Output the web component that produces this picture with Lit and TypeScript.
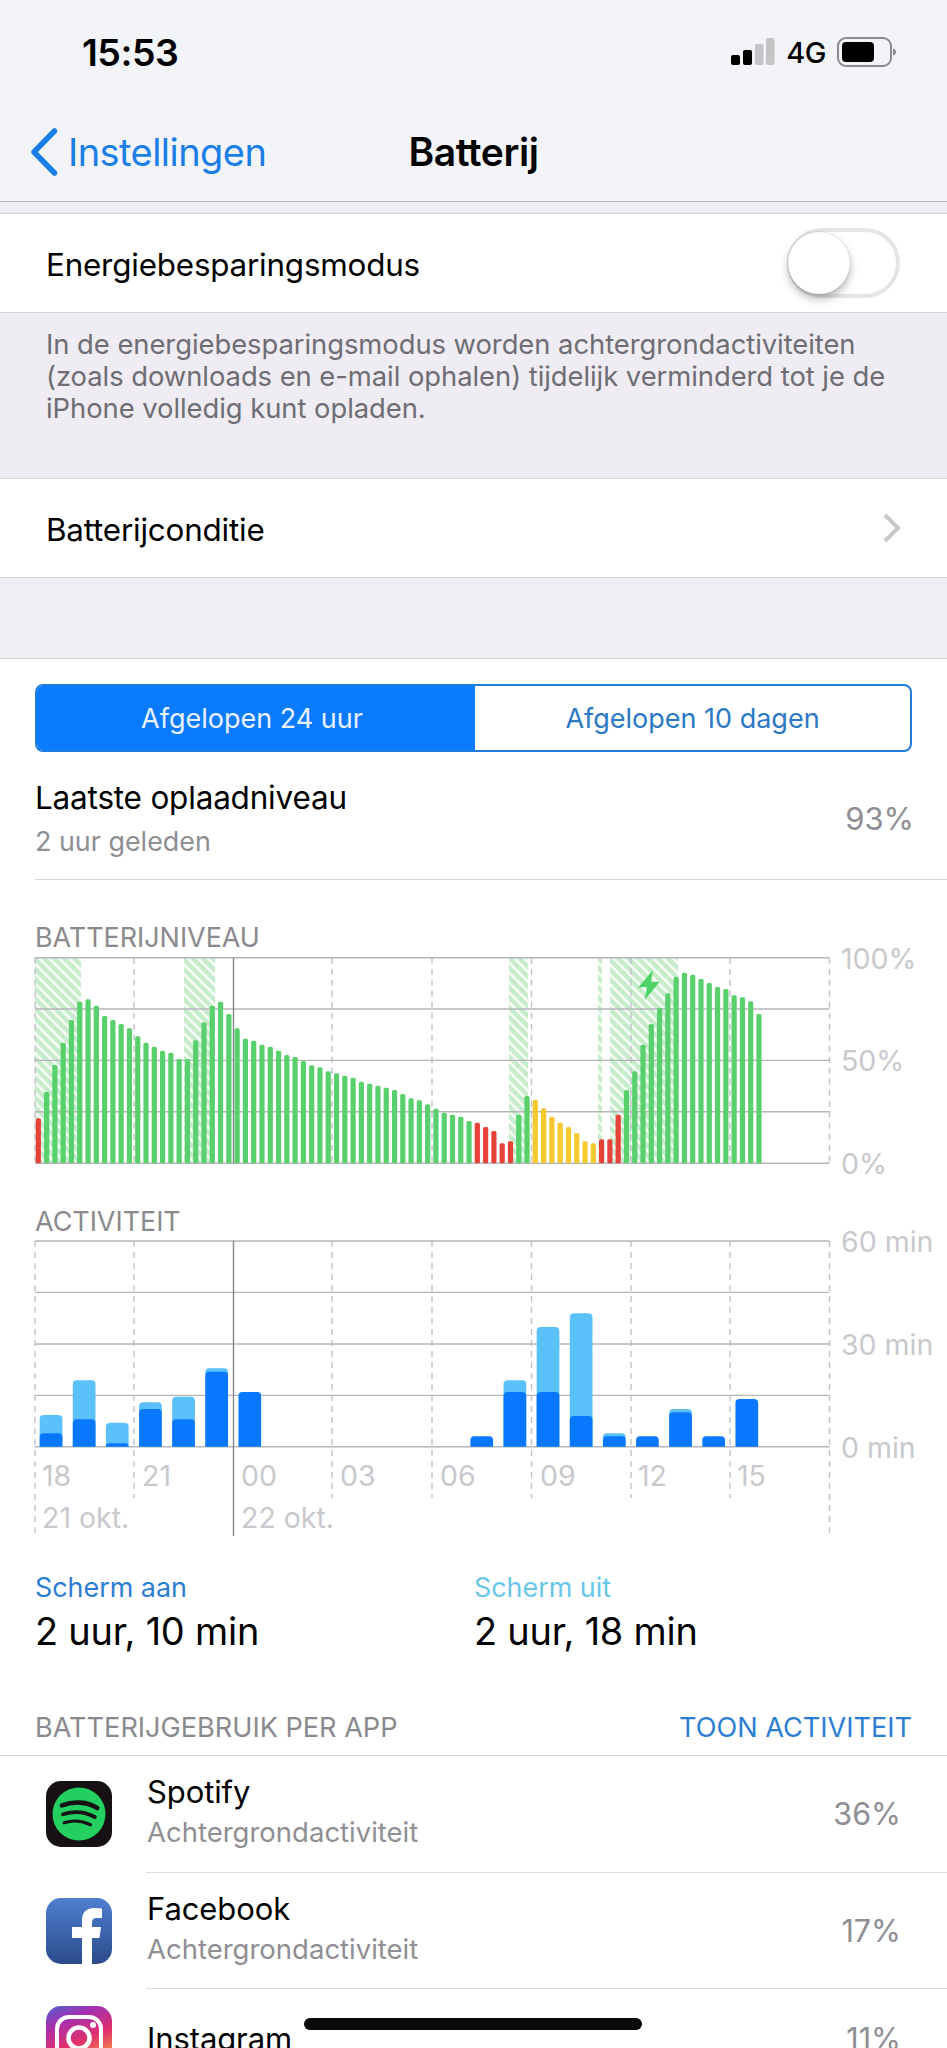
import { LitElement, css, html, svg } from 'lit';
import { customElement } from 'lit/decorators.js';

type Tone = 'g' | 'r' | 'y';

// bar tops as measured on the 3x crops, baseline is 730
const LEVELS: [number, Tone][] = [
  [595, 'r'], [516, 'g'], [435, 'g'], [368, 'g'], [300, 'g'], [245, 'g'], [238, 'g'], [257, 'g'], [288, 'g'],
  [300, 'g'], [312, 'g'], [325, 'g'], [349, 'g'], [368, 'g'], [380, 'g'], [392, 'g'], [398, 'g'], [417, 'g'],
  [417, 'g'], [361, 'g'], [307, 'g'], [257, 'g'], [245, 'g'], [282, 'g'], [325, 'g'], [356, 'g'], [362, 'g'],
  [374, 'g'], [380, 'g'], [392, 'g'], [405, 'g'], [411, 'g'], [423, 'g'], [436, 'g'], [442, 'g'], [454, 'g'],
  [460, 'g'], [467, 'g'], [473, 'g'], [485, 'g'], [491, 'g'], [497, 'g'], [503, 'g'], [510, 'g'], [522, 'g'],
  [535, 'g'], [541, 'g'], [553, 'g'], [566, 'g'], [578, 'g'], [584, 'g'], [590, 'g'], [603, 'g'], [608, 'r'],
  [621, 'r'], [633, 'r'], [670, 'r'], [664, 'r'], [584, 'g'], [528, 'g'], [540, 'y'], [565, 'y'], [590, 'y'],
  [608, 'y'], [621, 'y'], [639, 'y'], [664, 'y'], [670, 'y'], [658, 'r'], [658, 'r'], [584, 'r'], [510, 'g'],
  [454, 'g'], [374, 'g'], [312, 'g'], [263, 'g'], [220, 'g'], [171, 'g'], [158, 'g'], [164, 'g'], [177, 'g'],
  [189, 'g'], [201, 'g'], [207, 'g'], [226, 'g'], [232, 'g'], [244, 'g'], [282, 'g'],
];

// slot, top of light bar, top of dark bar (3x crops, baseline 740)
const ACTIVITY: [number, number, number][] = [
  [0, 645, 700], [1, 541, 658], [2, 668, 730], [3, 607, 627], [4, 590, 658], [5, 505, 515], [6, 576, 576],
  [13, 709, 709], [14, 541, 576], [15, 381, 576], [16, 340, 648], [17, 700, 709], [18, 709, 709],
  [19, 627, 637], [20, 709, 709], [21, 597, 597],
];

const CHARGING: [number, number][] = [[35, 46], [184, 31], [509, 19], [598, 4], [610, 68]];
const DASHES = [35, 134, 332, 432, 531.5, 631, 730, 829.5];
const HOURS: [string, number][] = [['18', 42], ['21', 142], ['00', 241], ['03', 340], ['06', 440], ['09', 540], ['12', 638], ['15', 737]];

@customElement('app-root')
export class AppRoot extends LitElement {
  static styles = css`
    :host {
      display: block;
      position: relative;
      width: 947px;
      height: 2048px;
      overflow: hidden;
      background: #fff;
      color: #000;
      font-family: Inter, 'Noto Sans', sans-serif;
    }

    .top {
      height: 201px;
      background: #f3f4f8;
      border-bottom: 1px solid #b4b4b8;
    }

    .status {
      display: flex;
      align-items: center;
      height: 104px;
      padding: 0 50px 0 82px;
    }

    .time {
      flex: 1;
      font-size: 37.5px;
      font-weight: 600;
      letter-spacing: -0.5px;
    }

    .net {
      margin: 0 11px 0 11px;
      font-size: 29px;
      font-weight: 500;
      letter-spacing: -0.5px;
    }

    .nav {
      display: grid;
      grid-template-columns: 1fr auto 1fr;
      align-items: center;
      box-sizing: border-box;
      height: 97px;
      padding-bottom: 2px;
    }

    .back {
      display: flex;
      align-items: center;
      gap: 10px;
      padding-left: 30px;
      font-size: 38px;
      color: #1a7ee6;
      letter-spacing: -0.55px;
    }

    .title {
      font-size: 39px;
      font-weight: 600;
      letter-spacing: -0.4px;
    }

    .gap {
      height: 11px;
      background: #eeeff4;
      border-bottom: 1px solid #d6d6da;
    }

    .row {
      display: flex;
      align-items: center;
      justify-content: space-between;
      height: 98px;
      padding: 0 46px;
      background: #fff;
      font-size: 31.4px;
      letter-spacing: -0.2px;
      border-bottom: 1px solid #d6d6da;
    }

    .row .label {
      margin-top: 4px;
    }

    .switch {
      display: flex;
      align-items: center;
      box-sizing: border-box;
      width: 113px;
      height: 70px;
      margin-right: 1px;
      border: 4px solid #e5e5e8;
      border-radius: 35px;
    }

    .knob {
      width: 62px;
      height: 62px;
      margin-left: -3px;
      border-radius: 50%;
      background: #fff;
      box-shadow: 0 5px 9px rgba(0, 0, 0, 0.28), 0 0 2px rgba(0, 0, 0, 0.2);
    }

    .note {
      box-sizing: border-box;
      height: 166px;
      padding: 15px 46px 0;
      background: #efecf3;
      color: #6e6d73;
      font-size: 27.4px;
      line-height: 32px;
      letter-spacing: -0.05px;
      white-space: nowrap;
      border-bottom: 1px solid #d9d9dd;
    }

    .band {
      height: 80px;
      background: #efeef3;
      border-bottom: 1px solid #d6d6da;
    }

    .segment {
      display: grid;
      grid-template-columns: 438px 1fr;
      box-sizing: border-box;
      width: 877px;
      height: 68px;
      margin: 25px 0 0 35px;
      border: 2px solid #1f7de0;
      border-radius: 8px;
      overflow: hidden;
      font-size: 27px;
      color: #2b78c5;
    }

    .segment span {
      display: flex;
      align-items: center;
      justify-content: center;
    }

    .segment .on {
      padding-right: 8px;
      background: #0a7aff;
      color: #e8f2ff;
    }

    .last {
      display: flex;
      align-items: center;
      justify-content: space-between;
      box-sizing: border-box;
      height: 128px;
      margin-left: 35px;
      padding: 6px 33px 0 0;
      border-bottom: 1px solid #d6d6da;
    }

    .last b {
      display: block;
      font-size: 31.5px;
      font-weight: 400;
      line-height: 44px;
      letter-spacing: -0.2px;
    }

    .last small {
      display: block;
      font-size: 26.9px;
      line-height: 42px;
      color: #8e8e93;
    }

    .last em {
      font-style: normal;
      font-size: 31px;
      color: #8e8e93;
    }

    .caption {
      height: 24px;
      margin-left: 35px;
      font-size: 26.9px;
      line-height: 24px;
      color: #8a8a8e;
    }

    .battery-title {
      margin-top: 45px;
    }

    svg.chart {
      display: block;
      width: 947px;
      overflow: visible;
    }

    .axis {
      font-size: 28.5px;
      fill: #c8c8cd;
      dominant-baseline: central;
    }

    .screen {
      display: grid;
      grid-template-columns: 439px 1fr;
      padding: 27px 0 0 35px;
    }

    .screen small {
      display: block;
      font-size: 26.9px;
      line-height: 30px;
    }

    .screen .aan {
      color: #2b7ed2;
    }

    .screen .uit {
      color: #69c6e8;
    }

    .screen b {
      display: block;
      margin-top: 7px;
      font-size: 37.9px;
      font-weight: 400;
      line-height: 44px;
      letter-spacing: -0.2px;
    }

    .usage {
      display: flex;
      justify-content: space-between;
      height: 41px;
      margin-top: 61px;
      padding: 0 35px;
      font-size: 27.1px;
      line-height: 28px;
      color: #8a8a8e;
      border-bottom: 1px solid #d6d6da;
    }

    .usage a {
      color: #2b7ed2;
    }

    .app {
      display: flex;
      align-items: center;
      gap: 34px;
      height: 116.5px;
      padding-left: 46px;
    }

    .app.short {
      height: 100px;
    }

    .app svg {
      flex: none;
      width: 66px;
      height: 66px;
      border-radius: 15px;
    }

    .body {
      flex: 1;
      display: flex;
      align-items: center;
      justify-content: space-between;
      align-self: stretch;
      padding: 0 46px 0 1px;
      border-bottom: 1px solid #dcdcdf;
    }

    .body b {
      display: block;
      font-size: 31px;
      font-weight: 400;
      line-height: 40px;
      letter-spacing: -0.1px;
    }

    .body small {
      display: block;
      margin-bottom: 2px;
      font-size: 27.5px;
      line-height: 41px;
      color: #8e8e93;
    }

    .body em {
      font-style: normal;
      font-size: 30.5px;
      color: #8e8e93;
    }

    .home {
      position: absolute;
      left: 304px;
      top: 2018px;
      width: 338px;
      height: 12px;
      border-radius: 6px;
      background: #0a0a0a;
    }
  `;

  // the chart viewBoxes use page y, so the measurements above can be read off directly
  private grid(ys: number[], bottom: number, tall: number) {
    return svg`
      ${DASHES.map((x, i) => svg`<line x1=${x} x2=${x} y1=${ys[0]} y2=${i === 0 || i === 7 ? tall : bottom}
        stroke="#c2c2c6" stroke-width="1.4" stroke-dasharray="6 5"></line>`)}
      ${ys.map((y) => svg`<line x1="35" x2="829.5" y1=${y} y2=${y} stroke="#b6b6ba" stroke-width="1.4"></line>`)}
      <line x1="233.5" x2="233.5" y1=${ys[0]} y2=${tall} stroke="#86868a" stroke-width="1.4"></line>
    `;
  }

  private battery() {
    const base = 1163.3;
    return html`<svg class="chart" viewBox="0 949 947 260" height="260">
      <defs>
        <pattern id="hatch" width="7" height="7" patternUnits="userSpaceOnUse" patternTransform="rotate(45)">
          <rect width="7" height="7" fill="#fbfefb"></rect>
          <rect width="7" height="4.6" fill="#c6eccb"></rect>
        </pattern>
      </defs>
      ${CHARGING.map(([x, w]) => svg`<rect x=${x} y="958" width=${w} height=${base - 958} fill="url(#hatch)"></rect>`)}
      ${this.grid([957.7, 1009, 1060.4, 1111.8, base], base, base)}
      ${LEVELS.map(([top, tone], i) => svg`<rect x=${(115 + 24.85 * i) / 3 - 2.6} y=${920 + top / 3} width="5.2"
        height=${(730 - top) / 3} rx="1.6" fill=${tone === 'g' ? '#58d06c' : tone === 'r' ? '#e6423a' : '#f6c92f'}></rect>`)}
      <path d="M653 970 638 987.7 647 986.7 644.7 1000 659.7 981.7 651 982.3Z" fill="#4fd268"></path>
      <text class="axis" x="841" y="958">100%</text>
      <text class="axis" x="841" y="1060">50%</text>
      <text class="axis" x="841" y="1163">0%</text>
    </svg>`;
  }

  private activity() {
    const base = 1446.7;
    return html`<svg class="chart" viewBox="0 1233 947 312" height="312">
      ${this.grid([1241, 1292.4, 1344, 1395.4, base], 1498, 1536)}
      ${ACTIVITY.map(([slot, light, dark]) => {
        const x = (119 + 99.4 * slot) / 3;
        return svg`
          ${light < dark
            ? svg`<path d=${this.bar(x, 1200 + light / 3, base)} fill="#5ac1fb"></path>`
            : ''}
          <path d=${this.bar(x, 1200 + dark / 3, base)} fill="#0a78fe"></path>`;
      })}
      ${HOURS.map(([t, x]) => svg`<text class="axis" x=${x} y="1475">${t}</text>`)}
      <text class="axis" x="42" y="1517">21 okt.</text>
      <text class="axis" x="241" y="1517">22 okt.</text>
      <text class="axis" x="841" y="1241">60 min</text>
      <text class="axis" x="841" y="1344">30 min</text>
      <text class="axis" x="841" y="1447">0 min</text>
    </svg>`;
  }

  private bar(x: number, top: number, base: number) {
    const r = Math.min(4, base - top);
    return `M${x} ${base}V${top + r}Q${x} ${top} ${x + r} ${top}H${x + 22.7 - r}Q${x + 22.7} ${top} ${x + 22.7} ${top + r}V${base}Z`;
  }

  render() {
    return html`
      <div class="top">
        <div class="status">
          <span class="time">15:53</span>
          <svg width="44" height="28" viewBox="0 0 44 28">
            <rect x="0" y="17" width="9" height="10" rx="2" fill="#000"></rect>
            <rect x="12" y="12" width="9" height="15" rx="2" fill="#000"></rect>
            <rect x="24" y="6" width="8.5" height="21" rx="2" fill="#c4c4c7"></rect>
            <rect x="35" y="0" width="8.5" height="27" rx="2" fill="#c4c4c7"></rect>
          </svg>
          <span class="net">4G</span>
          <svg width="60" height="30" viewBox="0 0 60 30">
            <rect x="1" y="1" width="53" height="28" rx="8" fill="none" stroke="#8c8c90" stroke-width="2"></rect>
            <rect x="5" y="5" width="32" height="20" rx="4" fill="#000"></rect>
            <path d="M56 11.5c2 .5 3 2 3 3.5s-1 3-3 3.5z" fill="#8c8c90"></path>
          </svg>
        </div>
        <div class="nav">
          <span class="back">
            <svg width="28" height="48" viewBox="0 0 28 48">
              <path d="M24.5 3 4 24l20.5 21" fill="none" stroke="#1a7ee6" stroke-width="5.5" stroke-linecap="round" stroke-linejoin="round"></path>
            </svg>
            Instellingen
          </span>
          <span class="title">Batterij</span>
        </div>
      </div>
      <div class="gap"></div>
      <div class="row">
        <span class="label">Energiebesparingsmodus</span>
        <span class="switch"><span class="knob"></span></span>
      </div>
      <div class="note">
        In de energiebesparingsmodus worden achtergrondactiviteiten<br />
        (zoals downloads en e-mail ophalen) tijdelijk verminderd tot je de<br />
        iPhone volledig kunt opladen.
      </div>
      <div class="row">
        <span class="label">Batterijconditie</span>
        <svg width="18" height="30" viewBox="0 0 18 30">
          <path d="M2 2l13 13L2 28" fill="none" stroke="#c7c7cc" stroke-width="4"></path>
        </svg>
      </div>
      <div class="band"></div>

      <div class="segment">
        <span class="on">Afgelopen 24 uur</span>
        <span>Afgelopen 10 dagen</span>
      </div>
      <div class="last">
        <div>
          <b>Laatste oplaadniveau</b>
          <small>2 uur geleden</small>
        </div>
        <em>93%</em>
      </div>

      <div class="caption battery-title">BATTERIJNIVEAU</div>
      ${this.battery()}
      <div class="caption">ACTIVITEIT</div>
      ${this.activity()}

      <div class="screen">
        <div><small class="aan">Scherm aan</small><b>2 uur, 10 min</b></div>
        <div><small class="uit">Scherm uit</small><b>2 uur, 18 min</b></div>
      </div>

      <div class="usage">
        <span>BATTERIJGEBRUIK PER APP</span>
        <a>TOON ACTIVITEIT</a>
      </div>

      <div class="app">
        <svg viewBox="0 0 66 66">
          <rect width="66" height="66" fill="#161213"></rect>
          <circle cx="33" cy="33" r="26.5" fill="#23cf5f"></circle>
          <g fill="none" stroke="#161213" stroke-linecap="round">
            <path d="M16 24.3C27 20 41 20.5 51.2 27" stroke-width="4.6"></path>
            <path d="M17 33.3C27 30 39 30.5 48.8 36" stroke-width="3.8"></path>
            <path d="M18.2 41.7C27 39 36 39.5 44.5 43.7" stroke-width="3.2"></path>
          </g>
        </svg>
        <div class="body">
          <div><b>Spotify</b><small>Achtergrondactiviteit</small></div>
          <em>36%</em>
        </div>
      </div>
      <div class="app">
        <svg viewBox="0 0 66 66">
          <defs>
            <linearGradient id="fb" x1="0" y1="0" x2="0" y2="1">
              <stop offset="0" stop-color="#4f7fcf"></stop>
              <stop offset="1" stop-color="#2b4b8c"></stop>
            </linearGradient>
          </defs>
          <rect width="66" height="66" fill="url(#fb)"></rect>
          <path d="M36 66V40H26V29H36V22C36 14 41 10 48 10Q52 10 56 10.500V20H51C47.500 20 46 21.500 46 25V29H55L53.500 40H46V66Z" fill="#fff"></path>
        </svg>
        <div class="body">
          <div><b>Facebook</b><small>Achtergrondactiviteit</small></div>
          <em>17%</em>
        </div>
      </div>
      <div class="app short">
        <svg viewBox="0 0 66 66">
          <defs>
            <linearGradient id="ig" x1="0.1" y1="0" x2="0.5" y2="1">
              <stop offset="0" stop-color="#5a5ccb"></stop>
              <stop offset="0.25" stop-color="#a42fb0"></stop>
              <stop offset="0.6" stop-color="#e1306c"></stop>
              <stop offset="1" stop-color="#f9a03c"></stop>
            </linearGradient>
          </defs>
          <rect width="66" height="66" fill="url(#ig)"></rect>
          <rect x="11" y="11" width="44" height="44" rx="12" fill="none" stroke="#fff" stroke-width="4"></rect>
          <circle cx="33" cy="32" r="10.500" fill="none" stroke="#fff" stroke-width="4.500"></circle>
          <circle cx="47" cy="19" r="3" fill="#fff"></circle>
        </svg>
        <div class="body">
          <div><b>Instagram</b></div>
          <em>11%</em>
        </div>
      </div>
      <div class="home"></div>
    `;
  }
}

declare global {
  interface HTMLElementTagNameMap {
    'app-root': AppRoot;
  }
}
